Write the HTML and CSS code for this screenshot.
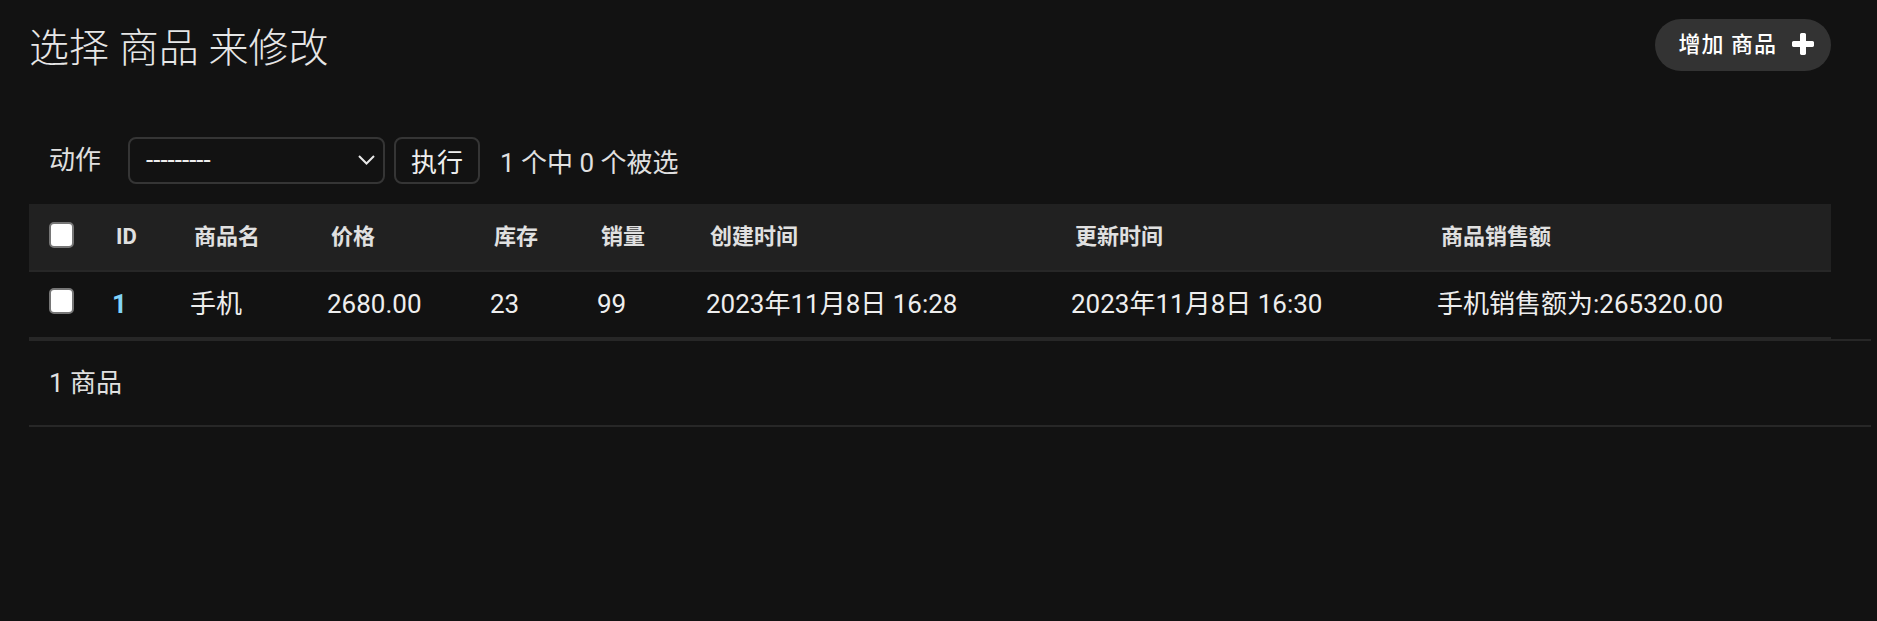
FILE: index.html
```html
<!DOCTYPE html>
<html lang="zh-CN">
<head>
<meta charset="utf-8">
<title>选择 商品 来修改</title>
<link rel="stylesheet" href="styles.css">
</head>
<body>
<div class="content">
  <div class="page-head">
    <h1 class="title">选择 商品 来修改</h1>
    <a class="addlink" href="#"><span class="addlink-text">增加 商品</span><svg class="addicon" viewBox="0 0 1792 1792"><path d="M1600 736v192q0 40-28 68t-68 28h-416v416q0 40-28 68t-68 28h-192q-40 0-68-28t-28-68v-416h-416q-40 0-68-28t-28-68v-192q0-40 28-68t68-28h416v-416q0-40 28-68t68-28h192q40 0 68 28t28 68v416h416q40 0 68 28t28 68z"/></svg></a>
  </div>
  <div class="changelist">
    <div class="actions">
      <span class="actions-label">动作</span>
      <div class="select"><span class="select-value">---------</span><svg class="chev" viewBox="0 0 17 10"><polyline points="1,1 8.5,8.5 16,1"/></svg></div>
      <button class="run" type="button">执行</button>
      <span class="counter">1 个中 0 个被选</span>
    </div>
    <table class="results">
      <colgroup>
        <col class="c-cb"><col class="c-id"><col class="c-name"><col class="c-price"><col class="c-stock"><col class="c-sales"><col class="c-created"><col class="c-updated"><col class="c-total">
      </colgroup>
      <thead>
        <tr>
          <th class="cb-cell"><span class="checkbox checkbox-head"></span></th>
          <th><span class="text">ID</span></th>
          <th><span class="text">商品名</span></th>
          <th><span class="text">价格</span></th>
          <th><span class="text">库存</span></th>
          <th><span class="text">销量</span></th>
          <th><span class="text">创建时间</span></th>
          <th><span class="text">更新时间</span></th>
          <th><span class="text">商品销售额</span></th>
        </tr>
      </thead>
      <tbody>
        <tr>
          <td class="cb-cell"><span class="checkbox checkbox-row"></span></td>
          <th class="field-id"><a class="row-link" href="#">1</a></th>
          <td>手机</td>
          <td>2680.00</td>
          <td>23</td>
          <td>99</td>
          <td>2023年11月8日 16:28</td>
          <td>2023年11月8日 16:30</td>
          <td>手机销售额为:265320.00</td>
        </tr>
      </tbody>
    </table>
    <p class="paginator">1 商品</p>
  </div>
</div>
</body>
</html>
```
FILE: styles.css
```css
html, body {
  margin: 0;
  padding: 0;
  background: #121212;
}

body {
  font-family: Roboto, "Noto Sans CJK SC", sans-serif;
  color: #eeeeee;
  height: 621px;
}

.content {
  padding: 0 46px 0 29px;
}

.page-head {
  box-sizing: border-box;
  height: 116px;
  padding-top: 19px;
  display: flex;
  justify-content: space-between;
  align-items: flex-start;
}

.title {
  margin: 0;
  padding-top: 4px;
  font-size: 40px;
  line-height: 52px;
  font-weight: 300;
  color: #e6e6e6;
}

.addlink {
  display: flex;
  align-items: center;
  box-sizing: border-box;
  height: 52px;
  padding: 0 14px 0 24px;
  background: #333333;
  border-radius: 26px;
  color: #ffffff;
  text-decoration: none;
  font-size: 22px;
  font-weight: 500;
  letter-spacing: 1px;
  line-height: 40px;
}

.addicon {
  width: 28px;
  height: 28px;
  margin-left: 12px;
  fill: #ffffff;
}

.actions {
  box-sizing: border-box;
  height: 88px;
  padding: 20px;
  display: flex;
  align-items: center;
  font-size: 26px;
  color: #e0e0e0;
}

.actions-label {
  line-height: 48px;
}

.select {
  box-sizing: border-box;
  width: 257px;
  height: 47px;
  margin-left: 27px;
  padding: 0 8px 0 16px;
  border: 2px solid #353535;
  border-radius: 8px;
  background: #121212;
  display: flex;
  align-items: center;
  justify-content: space-between;
  color: #eeeeee;
}

.chev {
  width: 17px;
  height: 10px;
  fill: none;
  stroke: #e8e8e8;
  stroke-width: 2;
}

.run {
  box-sizing: border-box;
  width: 86px;
  height: 47px;
  margin-left: 9px;
  padding: 0 15px;
  border: 2px solid #353535;
  border-radius: 8px;
  background: #121212;
  color: #eeeeee;
  font-family: inherit;
  font-size: 26px;
  text-align: left;
}

.counter {
  margin-left: 20px;
}

.results {
  width: 1802px;
  border-collapse: collapse;
  table-layout: fixed;
}

.c-cb { width: 67px; }
.c-id { width: 78px; }
.c-name { width: 137px; }
.c-price { width: 163px; }
.c-stock { width: 107px; }
.c-sales { width: 109px; }
.c-created { width: 365px; }
.c-updated { width: 366px; }
.c-total { width: 410px; }

.results thead th {
  padding: 0;
  background: #212121;
  border-bottom: 2px solid #272727;
  text-align: left;
  vertical-align: middle;
  font-size: 22px;
  font-weight: 700;
  color: #e0e0e0;
  white-space: nowrap;
}

.results thead .text {
  display: block;
  padding: 16px 20px;
  line-height: 34px;
}

.results tbody td,
.results tbody th {
  padding: 16px;
  line-height: 33px;
  font-size: 26px;
  font-weight: 400;
  text-align: left;
  vertical-align: middle;
  color: #eeeeee;
  border-bottom: 2px solid #272727;
  white-space: nowrap;
}

.results tbody .field-id {
  font-weight: 700;
}

.row-link {
  color: #81d4fa;
  text-decoration: none;
}

.results .cb-cell {
  padding: 0;
}

.checkbox {
  display: block;
  box-sizing: border-box;
  width: 25px;
  height: 26px;
  margin-left: 20px;
  border: 2px solid #767676;
  border-radius: 5px;
  background: #ffffff;
}

.checkbox-head {
  margin-bottom: 4px;
}

.checkbox-row {
  margin-bottom: 7px;
}

.paginator {
  box-sizing: border-box;
  width: calc(100% + 40px);
  margin: 0;
  padding: 20px;
  line-height: 44px;
  font-size: 26px;
  color: #e0e0e0;
  border-top: 2px solid #272727;
  border-bottom: 2px solid #272727;
}
```
